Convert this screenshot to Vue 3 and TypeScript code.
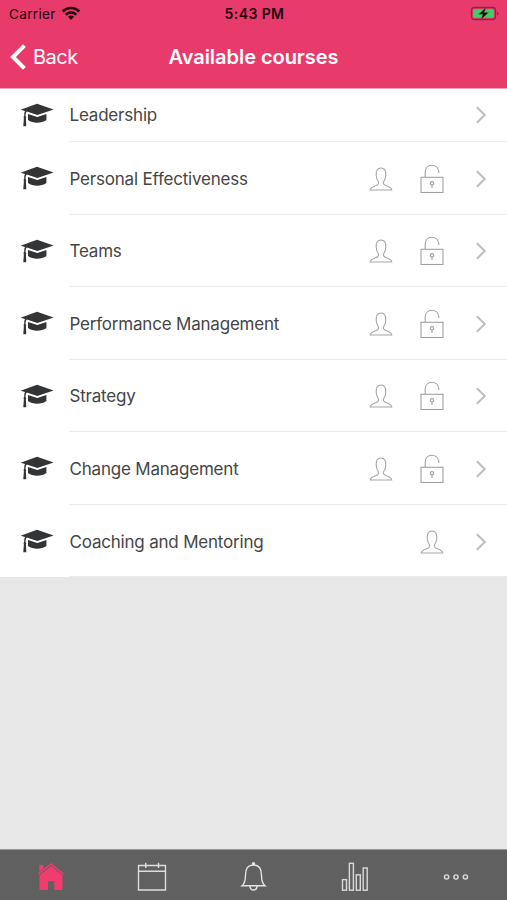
<script setup lang="ts">
interface Course {
  name: string
  person: boolean
  lock: boolean
}

const courses: Course[] = [
  { name: 'Leadership', person: false, lock: false },
  { name: 'Personal Effectiveness', person: true, lock: true },
  { name: 'Teams', person: true, lock: true },
  { name: 'Performance Management', person: true, lock: true },
  { name: 'Strategy', person: true, lock: true },
  { name: 'Change Management', person: true, lock: true },
  { name: 'Coaching and Mentoring', person: true, lock: false },
]
</script>

<template>
  <div class="screen">
    <header class="header">
      <div class="status">
        <div class="carrier">
          <span>Carrier</span>
          <svg width="20" height="15" viewBox="0 0 20 15" fill="none" stroke="#23060f" stroke-width="2.7">
            <path d="M1.7 5.5C6.2.8 13.8.8 18.3 5.5" />
            <path d="M4.7 8.7C7.7 5.7 12.3 5.7 15.3 8.7" />
            <path d="M7 10.8Q10 8.4 13 10.8L10 14Z" fill="#23060f" stroke="none" />
          </svg>
        </div>
        <span class="time">5:43 PM</span>
        <svg class="battery" width="30" height="15" viewBox="0 0 30 15">
          <rect x="1.5" y="1.5" width="24" height="12" rx="2.8" fill="none" stroke="#8d2549" stroke-width="1.3" />
          <rect x="3.2" y="3.2" width="20.6" height="8.6" rx="1.2" fill="#43ce64" />
          <path d="M27 5.4Q30 7.5 27 9.6Z" fill="#8d2549" />
          <path d="M15.8 1.7L8.6 8.2H12.8L11.2 13.3L18.6 6.6H14.2Z" fill="#23060f" stroke="#43773f" stroke-width=".4" />
        </svg>
      </div>
      <nav class="nav">
        <div class="back">
          <svg width="18" height="28" viewBox="0 0 18 28" fill="none" stroke="#fff" stroke-width="4">
            <path d="M15.4 2.6L4 14L15.4 25.4" />
          </svg>
          <span>Back</span>
        </div>
        <h1>Available courses</h1>
      </nav>
    </header>

    <main class="list">
      <div v-for="course in courses" :key="course.name" class="row">
        <svg class="cap" width="34" height="24" viewBox="0 0 34 24" fill="#333436">
          <path d="M.6 6.7L17 .8L33.6 6.4L17.3 12L6.9 8.6C5.7 9.5 5.6 11.4 5.6 13.2Q6.7 14.1 5.9 15.2L6.3 23.2H3.3L3.9 15.2Q3 14.1 4.2 13.1C4.2 10.8 4.3 9.2 5 8.1Z" />
          <path d="M8 11L17.3 14L26.4 11V17C21.5 20.4 13 20.6 8 17Z" />
        </svg>
        <div class="cell">
          <span class="name">{{ course.name }}</span>
          <div class="accessories">
            <svg v-if="course.person" width="24" height="30" viewBox="0 0 24 30" fill="none" stroke="#a6a6a6" stroke-width="1.1">
              <path d="M1.2 26H22.8C22.5 23.3 20.2 22.7 17.4 21.7C14.8 20.8 14.1 19.8 14.4 18.1C16.1 16.1 16.6 14.1 16.8 11.2C17 6.4 15.4 4 12 4S7 6.4 7.2 11.2C7.4 14.1 7.9 16.1 9.6 18.1C9.9 19.8 9.2 20.8 6.6 21.7C3.8 22.7 1.5 23.3 1.2 26Z" />
            </svg>
            <svg v-if="course.lock" width="24" height="30" viewBox="0 0 24 30" fill="none" stroke="#a0a0a0" stroke-width="1.1">
              <rect x="1" y="13.3" width="22" height="15.2" />
              <path d="M5.2 13V8.2C5.2-.9 17.7-1 18.8 7.6V9" />
              <circle cx="12" cy="19.3" r="1.7" />
              <path d="M12 21V24" />
            </svg>
          </div>
          <svg class="chevron" width="12" height="18" viewBox="0 0 12 18" fill="none" stroke="#bdbdbf" stroke-width="2">
            <path d="M1.8 1.2L9.8 9L1.8 16.8" />
          </svg>
        </div>
      </div>
    </main>

    <footer class="tabs">
      <div class="tab">
        <svg width="28" height="30" viewBox="0 0 28 30">
          <path d="M2.2 2.8H6.4V6.3L2.2 10Z" fill="#f13c70" />
          <path d="M2.5 13.3L14 4L25.5 13.3V28H17.2V19.2H11V28H2.5Z" fill="#f13c70" />
          <path d="M1.2 12.2L14 1.9L26.5 12.2" fill="none" stroke="#f13c70" stroke-width="1.5" />
          <path d="M2 13.2L14 3.6L25.8 13.2" fill="none" stroke="#9b4b60" stroke-width=".6" />
        </svg>
      </div>
      <div class="tab">
        <svg width="30" height="30" viewBox="0 0 30 30" fill="none" stroke="#dedede" stroke-width="1.4">
          <path d="M1.5 3.5H28.5V28H1.5ZM1.5 9.3H28.5M8.7 .8V6M21.5 .8V6" />
        </svg>
      </div>
      <div class="tab">
        <svg width="28" height="30" viewBox="0 0 28 30" fill="none" stroke="#e4e4e4" stroke-width="1.4">
          <path d="M3 23.7C5.8 21.4 6.5 18.8 6.5 13.2C6.5 6.2 8.8 3 14.5 3S22.5 6.2 22.5 13.2C22.5 18.8 23.2 21.4 26 23.7Z" />
          <path d="M11 24C11.1 29.4 17.9 29.4 18 24" />
          <circle cx="14.5" cy="1.8" r="1" fill="#e4e4e4" />
        </svg>
      </div>
      <div class="tab">
        <svg width="28" height="30" viewBox="0 0 28 30" fill="none" stroke="#dadada" stroke-width="1.4">
          <rect x="1.5" y="17.6" width="4" height="10.6" />
          <rect x="8.4" y="1.3" width="4" height="26.9" />
          <rect x="15.3" y="12.8" width="4" height="15.4" />
          <rect x="22.2" y="6" width="4" height="22.2" />
        </svg>
      </div>
      <div class="tab">
        <svg width="28" height="30" viewBox="0 0 28 30" fill="none" stroke="#dedede" stroke-width="1.4">
          <circle cx="4.6" cy="15" r="2.1" />
          <circle cx="14" cy="15" r="2.1" />
          <circle cx="23.4" cy="15" r="2.1" />
        </svg>
      </div>
    </footer>
  </div>
</template>

<style>
body {
  margin: 0;
}
</style>

<style scoped>
.screen {
  width: 507px;
  height: 900px;
  display: flex;
  flex-direction: column;
  overflow: hidden;
  background: #e7e7e7;
  font-family: Inter, "Liberation Sans", sans-serif;
}

.header {
  height: 88px;
  flex: none;
  background: #e83b6c;
  border-bottom: 1px solid #f0a3b7;
}

.status {
  height: 27px;
  display: grid;
  grid-template-columns: 1fr auto 1fr;
  align-items: center;
  padding: 0 7px 0 9px;
  color: #23060f;
  font-size: 13.5px;
}

.carrier {
  display: flex;
  align-items: center;
  gap: 5px;
  letter-spacing: 0.35px;
}

.time {
  font-size: 14px;
  font-weight: 600;
  letter-spacing: 0.4px;
}

.battery {
  justify-self: end;
}

.nav {
  height: 60px;
  display: grid;
  grid-template-columns: 1fr auto 1fr;
  align-items: center;
  padding: 0 9px;
  color: #fff;
}

.back {
  display: flex;
  align-items: center;
  gap: 6px;
  font-size: 20px;
  letter-spacing: -0.5px;
}

h1 {
  margin: 0;
  font-size: 20px;
  font-weight: 600;
  letter-spacing: -0.04px;
}

.list {
  background: #fff;
  flex: none;
}

.row {
  height: 72.55px;
  display: flex;
  align-items: center;
  padding-left: 20px;
}

.row:first-child {
  height: 53px;
}

.cap {
  flex: none;
  margin-right: 15px;
}

.row:first-child .cap {
  margin-bottom: 2px;
}

.cell {
  flex: 1;
  height: 100%;
  box-sizing: border-box;
  display: flex;
  align-items: center;
  padding: 2px 20px 0 0;
  border-bottom: 1px solid #ebebeb;
}

.row:first-child .cell {
  padding-top: 0;
}

.name {
  flex: 1;
  font-size: 17px;
  letter-spacing: -0.2px;
  padding-left: 0.5px;
  color: #464646;
}

.accessories {
  display: flex;
  gap: 27px;
}

.chevron {
  margin-left: 31px;
}

.tabs {
  height: 50px;
  flex: none;
  margin-top: auto;
  display: grid;
  grid-template-columns: repeat(5, 1fr);
  background: #606060;
  border-top: 1px solid #999;
}

.tab {
  display: flex;
  align-items: center;
  justify-content: center;
  padding-top: 4px;
}
</style>
